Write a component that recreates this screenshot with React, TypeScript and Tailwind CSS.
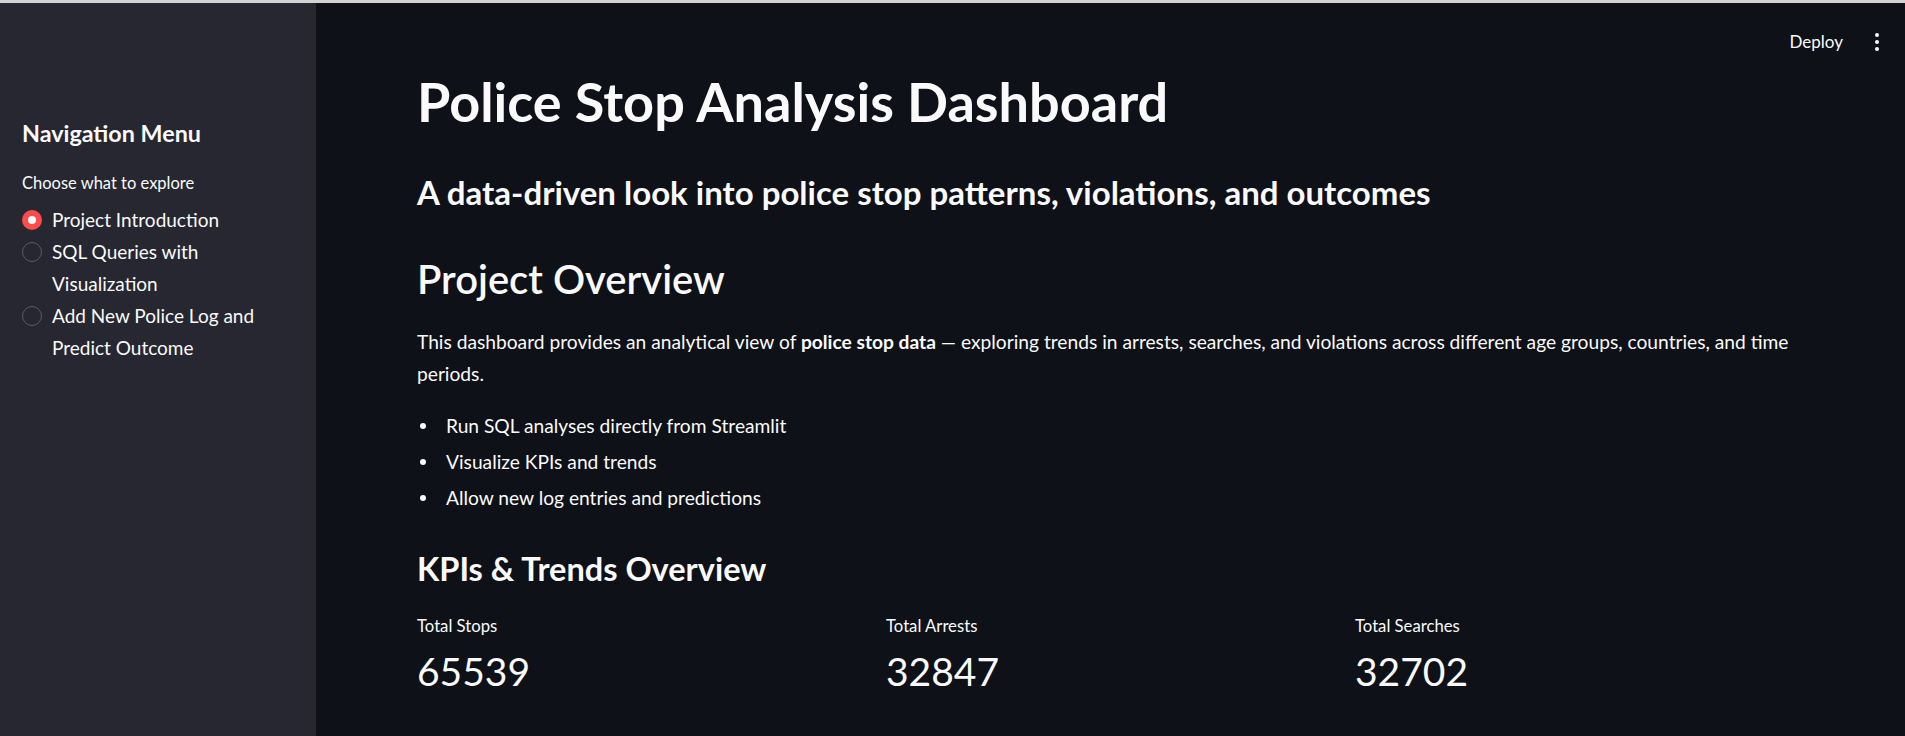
import React from 'react'

const options = [
  { label: 'Project Introduction', selected: true },
  { label: 'SQL Queries with Visualization', selected: false },
  { label: 'Add New Police Log and Predict Outcome', selected: false },
]

const bullets = [
  'Run SQL analyses directly from Streamlit',
  'Visualize KPIs and trends',
  'Allow new log entries and predictions',
]

const metrics = [
  { label: 'Total Stops', value: '65539' },
  { label: 'Total Arrests', value: '32847' },
  { label: 'Total Searches', value: '32702' },
]

function Radio({ selected }: { selected: boolean }) {
  if (selected) {
    return (
      <span className="mt-[6px] flex h-[20px] w-[20px] shrink-0 items-center justify-center rounded-full bg-[#ff4b4b]">
        <span className="h-[8px] w-[8px] rounded-full bg-white" />
      </span>
    )
  }
  return <span className="mt-[6px] h-[20px] w-[20px] shrink-0 rounded-full border border-[#5b5c66]" />
}

export default function App() {
  return (
    <div className="min-h-screen bg-[#0e1117] text-[#fafafa] font-['Lato','Noto_Sans',sans-serif]">
      <div className="h-[3px] bg-[#d3d3d3]" />
      <div className="flex h-[733px]">
        {/* Sidebar */}
        <aside className="w-[316px] shrink-0 bg-[#262730] px-[22px] pt-[115px]">
          <h2 className="text-[23.3px] leading-[30px] font-bold">Navigation Menu</h2>
          <p className="mt-[23px] text-[16.5px] leading-[24px]">Choose what to explore</p>
          <div className="mt-[9px] flex flex-col">
            {options.map((o) => (
              <label key={o.label} className="flex items-start gap-[10px]">
                <Radio selected={o.selected} />
                <span className="w-[240px] text-[19px] leading-[32px]">{o.label}</span>
              </label>
            ))}
          </div>
        </aside>

        {/* Main */}
        <main className="flex-1">
          <header className="flex h-[68px] items-start justify-end gap-[32px] pr-[26px] pt-[27px]">
            <span className="text-[17px] leading-[24px]">Deploy</span>
            <span className="flex h-[24px] flex-col items-center justify-center gap-[3px]">
              <span className="h-[4px] w-[4px] rounded-full bg-[#fafafa]" />
              <span className="h-[4px] w-[4px] rounded-full bg-[#fafafa]" />
              <span className="h-[4px] w-[4px] rounded-full bg-[#fafafa]" />
            </span>
          </header>

          <div className="px-[101px]">
            <h1 className="text-[54px] leading-[61px] font-bold">Police Stop Analysis Dashboard</h1>
            <h3 className="mt-[40px] text-[33px] leading-[40px] font-bold">
              A data-driven look into police stop patterns, violations, and outcomes
            </h3>
            <h2 className="mt-[43px] text-[40px] leading-[48px] font-semibold">Project Overview</h2>
            <div className="mt-[23px] text-[19.2px] leading-[32px]">
              This dashboard provides an analytical view of <b className="font-bold">police stop data</b> — exploring
              trends in arrests, searches, and violations across different age groups, countries, and time periods.
            </div>
            <ul className="mt-[20px] flex flex-col gap-[4px]">
              {bullets.map((b) => (
                <li key={b} className="flex items-center text-[19.2px] leading-[32px]">
                  <span className="ml-[3px] mr-[20px] h-[6px] w-[6px] rounded-full bg-[#fafafa]" />
                  {b}
                </li>
              ))}
            </ul>
            <h3 className="mt-[35px] text-[32.5px] leading-[40px] font-bold">KPIs &amp; Trends Overview</h3>
            <div className="mt-[25px] grid grid-cols-3 gap-5">
              {metrics.map((m) => (
                <div key={m.label}>
                  <div className="text-[16.7px] leading-[24px]">{m.label}</div>
                  <div className="mt-[7px] text-[39px] leading-[52px]">{m.value}</div>
                </div>
              ))}
            </div>
          </div>
        </main>
      </div>
    </div>
  )
}
